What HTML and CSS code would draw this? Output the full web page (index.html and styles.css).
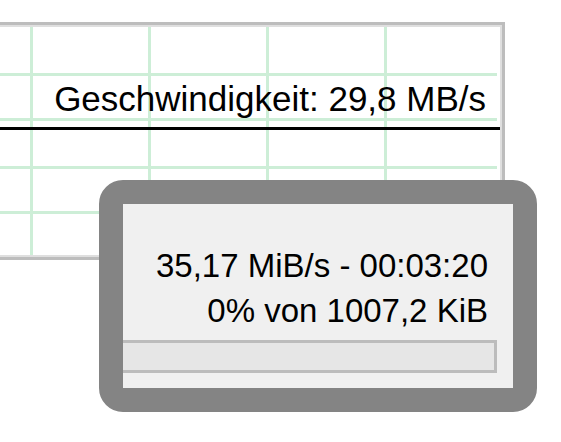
FILE: index.html
```html
<!DOCTYPE html>
<html lang="de">
<head>
    <meta charset="UTF-8">
    <title>Kopiervorgang</title>
    <link rel="stylesheet" href="styles.css">
</head>
<body>

<div class="graph">
    <div class="graph-inner">
        <div class="grid grid-top">
            <div class="speed-label">Geschwindigkeit: 29,8 MB/s</div>
        </div>
        <div class="speed-line"></div>
        <div class="grid grid-bottom"></div>
    </div>
</div>

<div class="popup">
    <div class="popup-panel">
        <div class="popup-text">35,17 MiB/s - 00:03:20</div>
        <div class="popup-text">0% von 1007,2 KiB</div>
        <div class="progress"></div>
    </div>
</div>

</body>
</html>
```

FILE: styles.css
```css
body { margin: 0; background: #fff; position: relative; width: 561px; height: 442px; overflow: hidden; }

.graph { margin-top: 22px; width: 502px; border: 3px solid #bdbdbd; border-left: 0; }
.graph-inner { border: 2px solid #dfdfdf; border-left: 0; background: #fff; }
.grid { margin-right: 3px; background-repeat: repeat, no-repeat; }
.grid-top {
    height: 100px; box-sizing: border-box; padding-top: 51px;
    background-image:
        linear-gradient(to right, #cdeed7 0, #cdeed7 3px, transparent 3px),
        linear-gradient(to bottom, transparent 46px, #cdeed7 46px, #cdeed7 49px, transparent 49px, transparent 91px, #cdeed7 91px, #cdeed7 94px, transparent 94px);
    background-size: 118px 100%, 100% 100%;
    background-position: 30px 0, 0 0;
}
.grid-bottom {
    height: 125px;
    background-image:
        linear-gradient(to right, #cdeed7 0, #cdeed7 3px, transparent 3px),
        linear-gradient(to bottom, transparent 36px, #cdeed7 36px, #cdeed7 39px, transparent 39px, transparent 81px, #cdeed7 81px, #cdeed7 84px, transparent 84px);
    background-size: 118px 100%, 100% 100%;
    background-position: 30px 0, 0 0;
}
.speed-label { font-family: "Liberation Sans", Arial, sans-serif; font-size: 35px; line-height: 42px; text-align: right; padding-right: 11px; color: #000; }
.speed-line { height: 3px; background: #000; }

.popup { position: absolute; left: 99px; top: 180px; border: 24px solid #848484; border-radius: 24px; }
.popup-panel { width: 390px; height: 184px; box-sizing: border-box; background: #f0f0f0; padding-top: 39px; overflow: hidden; }
.popup-text { font-family: "Liberation Sans", Arial, sans-serif; font-size: 33px; line-height: 45px; text-align: right; padding-right: 25px; color: #000; }
.progress { margin: 7px 16px 0 -10px; height: 27px; border: 3px solid #bcbcbc; background: #e6e6e6; }
```
